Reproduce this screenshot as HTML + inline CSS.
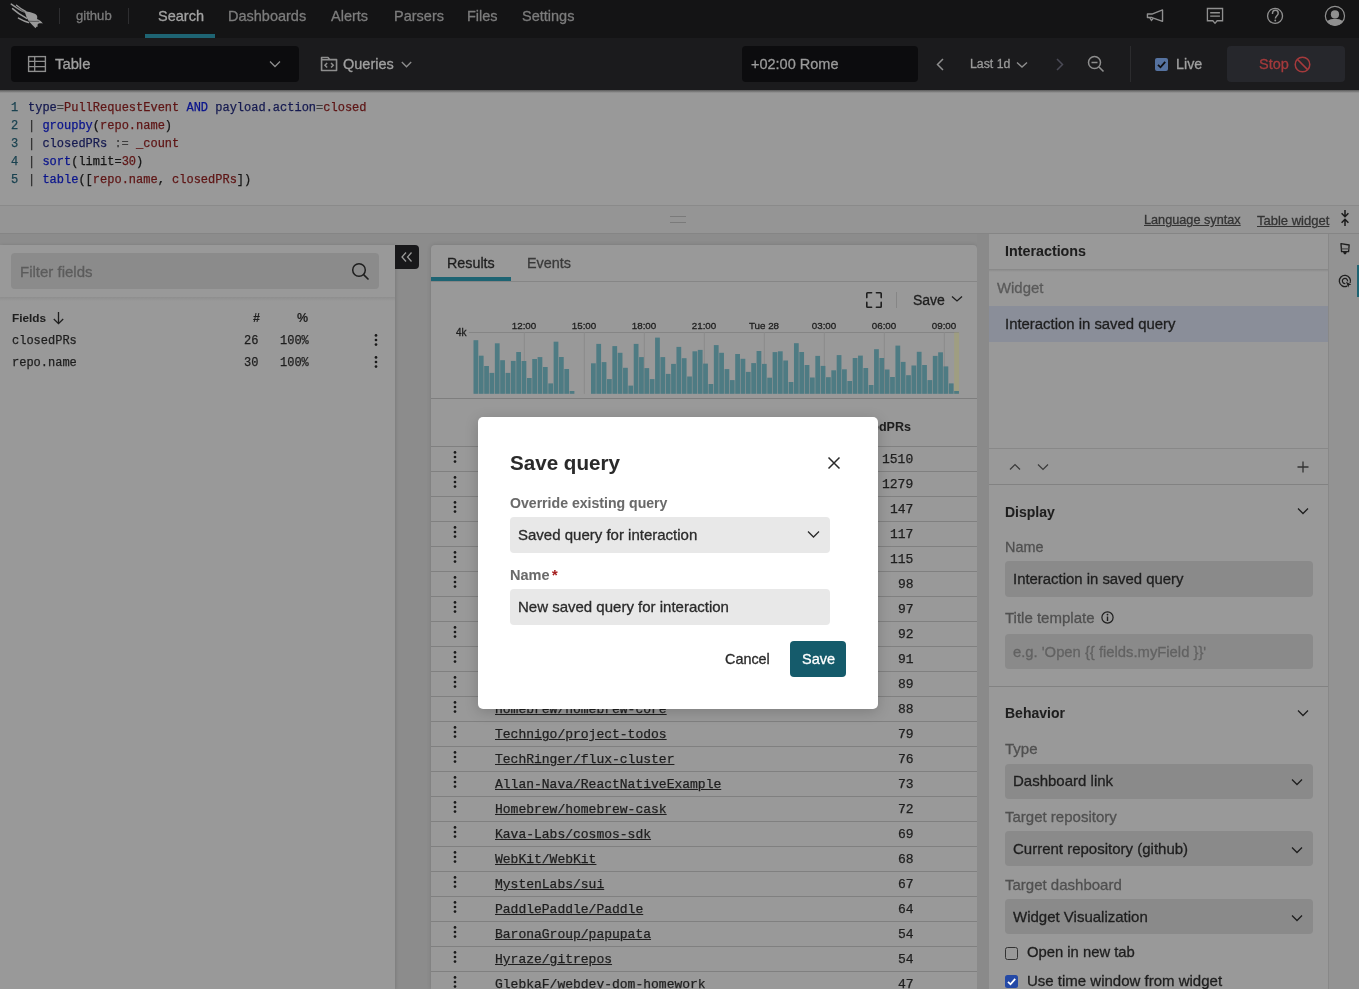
<!DOCTYPE html>
<html><head><meta charset="utf-8"><title>Save query</title>
<style>
html,body{margin:0;padding:0;}
body{width:1359px;height:989px;overflow:hidden;position:relative;background:#8d8d8d;font-family:"Liberation Sans",sans-serif;}
.a{position:absolute;}
.s{font-family:"Liberation Sans",sans-serif;white-space:pre;-webkit-text-stroke:0.3px currentColor;}
.m{font-family:"Liberation Mono",monospace;white-space:pre;-webkit-text-stroke:0.25px currentColor;}
svg{overflow:visible;}
.s,.m{will-change:transform;}
</style></head><body>
<div class="a" style="left:0px;top:0px;width:1359px;height:38px;background:#141415;"></div>
<svg class="a" style="left:5px;top:0px" width="50" height="34" viewBox="0 0 1359 924"><path d="M530 300 C650 320 790 350 850 400 C885 430 880 480 870 515 C930 540 990 580 1030 640 C990 632 955 625 915 640 C885 655 870 690 900 722 C870 712 850 725 830 770 C770 705 710 650 660 590 C620 545 580 470 530 300 Z" fill="#9a9a9a"/><path d="M170 112 C300 205 420 280 540 330" stroke="#9a9a9a" stroke-width="40" fill="none" stroke-linecap="round"/><path d="M312 142 C400 215 470 265 560 310" stroke="#9a9a9a" stroke-width="34" fill="none" stroke-linecap="round"/><path d="M205 235 C320 340 440 420 590 500" stroke="#9a9a9a" stroke-width="40" fill="none" stroke-linecap="round"/><path d="M365 492 C450 540 540 585 640 612" stroke="#9a9a9a" stroke-width="40" fill="none" stroke-linecap="round"/><path d="M640 575 C740 585 840 582 930 578" stroke="#141415" stroke-width="14" fill="none"/><path d="M300 175 C400 250 470 300 545 340" stroke="#141415" stroke-width="12" fill="none"/></svg>
<div class="a" style="left:59px;top:8px;width:1px;height:16px;background:#2e2e30;"></div>
<div class="a s" style="left:76px;top:8.91px;font-size:13.1px;line-height:13.1px;color:#7b7b7b;font-weight:400;">github</div>
<div class="a" style="left:128px;top:8px;width:1px;height:16px;background:#2e2e30;"></div>
<div class="a s" style="left:157.5px;top:8.92px;font-size:14.5px;line-height:14.5px;color:#a3a3a3;font-weight:400;">Search</div>
<div class="a s" style="left:227.7px;top:8.92px;font-size:14.5px;line-height:14.5px;color:#7c7c7c;font-weight:400;">Dashboards</div>
<div class="a s" style="left:330.7px;top:8.92px;font-size:14.5px;line-height:14.5px;color:#7c7c7c;font-weight:400;">Alerts</div>
<div class="a s" style="left:393.8px;top:8.92px;font-size:14.5px;line-height:14.5px;color:#7c7c7c;font-weight:400;">Parsers</div>
<div class="a s" style="left:467.3px;top:8.92px;font-size:14.5px;line-height:14.5px;color:#7c7c7c;font-weight:400;">Files</div>
<div class="a s" style="left:522.4px;top:8.92px;font-size:14.5px;line-height:14.5px;color:#7c7c7c;font-weight:400;">Settings</div>
<div class="a" style="left:145px;top:34px;width:70px;height:4px;background:#1e6473;"></div>
<svg class="a" style="left:1140px;top:2px" width="90" height="28" viewBox="0 0 1359 423"><path d="M112 182 H180 L340 120 V292 L180 235 H112 Z" fill="none" stroke="#909090" stroke-width="21" stroke-linejoin="round"/><path d="M148 238 L172 278 L198 250" fill="none" stroke="#909090" stroke-width="19"/><path d="M1018 98 H1247 V283 H1165 L1133 322 L1100 283 H1018 Z" fill="none" stroke="#909090" stroke-width="20"/><path d="M1060 162 H1207 M1060 213 H1207" stroke="#909090" stroke-width="20"/></svg>
<svg class="a" style="left:1260px;top:2px" width="90" height="28" viewBox="0 0 1359 423"><circle cx="227" cy="210" r="113" fill="none" stroke="#909090" stroke-width="20"/><path d="M188 180 C188 140 215 125 232 125 C258 125 275 145 275 170 C275 205 232 210 232 250" fill="none" stroke="#909090" stroke-width="22"/><circle cx="230" cy="280" r="14" fill="#909090"/><circle cx="1132" cy="210" r="145" fill="none" stroke="#909090" stroke-width="18"/><circle cx="1132" cy="188" r="62" fill="#909090"/><path d="M1010 292 C1040 262 1090 252 1132 252 C1175 252 1225 262 1255 292 C1225 335 1180 358 1132 358 C1084 358 1040 335 1010 292 Z" fill="#909090"/></svg>
<div class="a" style="left:0px;top:38px;width:1359px;height:52px;background:#1b1b1d;"></div>
<div class="a" style="left:11px;top:46px;width:288px;height:36px;background:#0c0c0e;border-radius:4px;"></div>
<svg class="a" style="left:27px;top:55px;" width="20" height="18" viewBox="0 0 20 18"><rect x="1.6" y="1.6" width="16.8" height="14.8" fill="none" stroke="#8e8e8e" stroke-width="1.4"/><path d="M1.6 6.4 H18.4 M1.6 11.6 H18.4 M7.7 1.6 V16.4" stroke="#8e8e8e" stroke-width="1.3"/></svg>
<div class="a s" style="left:55.3px;top:57.07px;font-size:14.8px;line-height:14.8px;color:#a0a0a0;font-weight:400;">Table</div>
<svg class="a" style="left:269px;top:60px;" width="12" height="8" viewBox="0 0 12 8"><path d="M1 1.5 L6 6.5 L11 1.5" fill="none" stroke="#8e8e8e" stroke-width="1.25"/></svg>
<svg class="a" style="left:310px;top:45px" width="110" height="40" viewBox="0 0 1359 494"><path d="M143 315 V155 H222 L242 180 H328 V315 Z M143 182 H328" fill="none" stroke="#8e8e8e" stroke-width="20" stroke-linejoin="round"/><path d="M212 222 L185 250 L212 278 M260 222 L287 250 L260 278" fill="none" stroke="#8e8e8e" stroke-width="19"/></svg>
<div class="a s" style="left:343px;top:56.72px;font-size:14.5px;line-height:14.5px;color:#a0a0a0;font-weight:400;">Queries</div>
<svg class="a" style="left:401px;top:61px;" width="11" height="7" viewBox="0 0 11 7"><path d="M0.8 1 L5.5 5.8 L10.2 1" fill="none" stroke="#8e8e8e" stroke-width="1.3"/></svg>
<div class="a" style="left:742px;top:46px;width:176px;height:36px;background:#0c0c0e;border-radius:4px;"></div>
<div class="a s" style="left:750.5px;top:56.72px;font-size:14.5px;line-height:14.5px;color:#9a9a9a;font-weight:400;">+02:00 Rome</div>
<svg class="a" style="left:935px;top:58px;" width="10" height="13" viewBox="0 0 10 13"><path d="M8 1 L2.5 6.5 L8 12" fill="none" stroke="#8e8e8e" stroke-width="1.5"/></svg>
<div class="a s" style="left:969.8px;top:58.09px;font-size:12.3px;line-height:12.3px;color:#9a9a9a;font-weight:400;">Last 1d</div>
<svg class="a" style="left:1016px;top:61px;" width="12" height="8" viewBox="0 0 12 8"><path d="M1 1.5 L6 6 L11 1.5" fill="none" stroke="#8e8e8e" stroke-width="1.4"/></svg>
<svg class="a" style="left:1055px;top:58px;" width="10" height="13" viewBox="0 0 10 13"><path d="M2 1 L7.5 6.5 L2 12" fill="none" stroke="#4a4a55" stroke-width="1.5"/></svg>
<svg class="a" style="left:1087px;top:55px;" width="18" height="18" viewBox="0 0 18 18"><circle cx="7.5" cy="7.5" r="6" fill="none" stroke="#8e8e8e" stroke-width="1.5"/><path d="M4.5 7.5 H10.5 M12 12 L16.5 16.5" stroke="#8e8e8e" stroke-width="1.6"/></svg>
<div class="a" style="left:1130px;top:46px;width:1px;height:36px;background:#2c2c2e;"></div>
<div class="a" style="left:1155px;top:58px;width:13px;height:13px;background:#5572a0;border-radius:2px;"></div>
<svg class="a" style="left:1155px;top:58px;" width="13" height="13" viewBox="0 0 13 13"><path d="M3 6.8 L5.5 9.3 L10.2 3.8" fill="none" stroke="#0e0e10" stroke-width="1.8"/></svg>
<div class="a s" style="left:1176.3px;top:56.89px;font-size:14.3px;line-height:14.3px;color:#a0a0a0;font-weight:400;">Live</div>
<div class="a" style="left:1227px;top:46px;width:118px;height:36px;background:#26272c;border-radius:4px;"></div>
<div class="a s" style="left:1259px;top:56.72px;font-size:14.5px;line-height:14.5px;color:#a53a3c;font-weight:400;">Stop</div>
<svg class="a" style="left:1294px;top:56px;" width="17" height="17" viewBox="0 0 17 17"><circle cx="8.5" cy="8.5" r="7.3" fill="none" stroke="#a53a3c" stroke-width="1.5"/><path d="M3.4 3.4 L13.6 13.6" stroke="#a53a3c" stroke-width="1.5"/></svg>
<div class="a" style="left:0px;top:90px;width:1359px;height:115px;background:#999999;"></div>
<div class="a" style="left:0px;top:90px;width:1359px;height:3px;background:linear-gradient(#5a5a5a,#999999);"></div>
<div class="a m" style="left:10.5px;top:101.81px;font-size:12px;line-height:12.0px;color:#1a4250;font-weight:400;">1</div>
<div class="a m" style="left:28.1px;top:101.81px;font-size:12px;line-height:12.0px;color:#161616;font-weight:400;"><span style="color:#151a50">type</span><span style="color:#3e3e3e">=</span><span style="color:#5e1515">PullRequestEvent</span> <span style="color:#0a148c">AND</span> <span style="color:#151a50">payload.action</span><span style="color:#3e3e3e">=</span><span style="color:#5e1515">closed</span></div>
<div class="a m" style="left:10.5px;top:119.81px;font-size:12px;line-height:12.0px;color:#1a4250;font-weight:400;">2</div>
<div class="a m" style="left:28.1px;top:119.81px;font-size:12px;line-height:12.0px;color:#161616;font-weight:400;"><span style="color:#2e2e2e">|</span> <span style="color:#0a148c">groupby</span><span style="color:#161616">(</span><span style="color:#5e1515">repo.name</span><span style="color:#161616">)</span></div>
<div class="a m" style="left:10.5px;top:137.81px;font-size:12px;line-height:12.0px;color:#1a4250;font-weight:400;">3</div>
<div class="a m" style="left:28.1px;top:137.81px;font-size:12px;line-height:12.0px;color:#161616;font-weight:400;"><span style="color:#2e2e2e">|</span> <span style="color:#151a50">closedPRs</span><span style="color:#3e3e3e"> := </span><span style="color:#5e1515">_count</span></div>
<div class="a m" style="left:10.5px;top:155.81px;font-size:12px;line-height:12.0px;color:#1a4250;font-weight:400;">4</div>
<div class="a m" style="left:28.1px;top:155.81px;font-size:12px;line-height:12.0px;color:#161616;font-weight:400;"><span style="color:#2e2e2e">|</span> <span style="color:#0a148c">sort</span><span style="color:#161616">(limit=</span><span style="color:#5e1515">30</span><span style="color:#161616">)</span></div>
<div class="a m" style="left:10.5px;top:173.81px;font-size:12px;line-height:12.0px;color:#1a4250;font-weight:400;">5</div>
<div class="a m" style="left:28.1px;top:173.81px;font-size:12px;line-height:12.0px;color:#161616;font-weight:400;"><span style="color:#2e2e2e">|</span> <span style="color:#0a148c">table</span><span style="color:#161616">([</span><span style="color:#5e1515">repo.name</span><span style="color:#161616">, </span><span style="color:#5e1515">closedPRs</span><span style="color:#161616">])</span></div>
<div class="a" style="left:0px;top:205px;width:1359px;height:28px;background:#959595;"></div>
<div class="a" style="left:0px;top:205px;width:1359px;height:1px;background:#8a8a8a;"></div>
<div class="a" style="left:670px;top:216px;width:16px;height:1px;background:#7a7a7a;"></div>
<div class="a" style="left:670px;top:222px;width:16px;height:1px;background:#7a7a7a;"></div>
<div class="a s" style="left:1143.5px;top:214.25px;font-size:12.7px;line-height:12.7px;color:#343434;font-weight:400;text-decoration:underline;">Language syntax</div>
<div class="a s" style="left:1256.6px;top:213.99px;font-size:13px;line-height:13.0px;color:#343434;font-weight:400;text-decoration:underline;">Table widget</div>
<svg class="a" style="left:1340px;top:209px;" width="10" height="18" viewBox="0 0 10 18"><path d="M5 1 V7.5 M1.6 4.3 L5 7.7 L8.4 4.3 M5 17 V10.5 M1.6 13.7 L5 10.3 L8.4 13.7" fill="none" stroke="#1a1a1a" stroke-width="1.5"/></svg>
<div class="a" style="left:0px;top:233px;width:1359px;height:1px;background:#858585;"></div>
<!--BODY-->
<div class="a" style="left:0px;top:234px;width:1359px;height:755px;background:#8c8c8c;"></div>
<div class="a" style="left:0px;top:245px;width:395px;height:744px;background:#999999;box-shadow:1px 0 3px rgba(0,0,0,0.12);"></div>
<div class="a" style="left:0px;top:297px;width:395px;height:4px;background:linear-gradient(#8e8e8e,#999999);"></div>
<div class="a" style="left:11px;top:253px;width:368px;height:36px;background:#8b8b8b;border-radius:4px;"></div>
<div class="a s" style="left:19.6px;top:263.80px;font-size:15px;line-height:15.0px;color:#5c5c5c;font-weight:400;">Filter fields</div>
<svg class="a" style="left:351px;top:262px;" width="19" height="19" viewBox="0 0 19 19"><circle cx="8" cy="8" r="6.3" fill="none" stroke="#1e1e1e" stroke-width="1.5"/><path d="M12.6 12.6 L17.5 17.5" stroke="#1e1e1e" stroke-width="1.6"/></svg>
<div class="a s" style="left:12px;top:312.91px;font-size:11.8px;line-height:11.8px;color:#1e1e1e;font-weight:700;-webkit-text-stroke:0.05px currentColor;">Fields</div>
<svg class="a" style="left:52px;top:311px;" width="13" height="14" viewBox="0 0 13 14"><path d="M6.5 1 V12.5 M1.8 8 L6.5 12.7 L11.2 8" fill="none" stroke="#1e1e1e" stroke-width="1.3"/></svg>
<div class="a s" style="right:1099.5px;top:312.32px;font-size:12.5px;line-height:12.5px;color:#1e1e1e;font-weight:700;-webkit-text-stroke:0.05px currentColor;">#</div>
<div class="a s" style="right:1050.5px;top:312.32px;font-size:12.5px;line-height:12.5px;color:#1e1e1e;font-weight:700;-webkit-text-stroke:0.05px currentColor;">%</div>
<div class="a m" style="left:12px;top:334.81px;font-size:12px;line-height:12.0px;color:#1e1e1e;font-weight:400;">closedPRs</div>
<div class="a m" style="right:1101px;top:334.81px;font-size:12px;line-height:12.0px;color:#1e1e1e;font-weight:400;">26</div>
<div class="a m" style="right:1050.5px;top:334.81px;font-size:12px;line-height:12.0px;color:#1e1e1e;font-weight:400;">100%</div>
<svg class="a" style="left:374px;top:332.5px;" width="4" height="14" viewBox="0 0 4 14"><circle cx="2" cy="2.4" r="1.35" fill="#1a1a1a"/><circle cx="2" cy="7" r="1.35" fill="#1a1a1a"/><circle cx="2" cy="11.6" r="1.35" fill="#1a1a1a"/></svg>
<div class="a m" style="left:12px;top:356.81px;font-size:12px;line-height:12.0px;color:#1e1e1e;font-weight:400;">repo.name</div>
<div class="a m" style="right:1101px;top:356.81px;font-size:12px;line-height:12.0px;color:#1e1e1e;font-weight:400;">30</div>
<div class="a m" style="right:1050.5px;top:356.81px;font-size:12px;line-height:12.0px;color:#1e1e1e;font-weight:400;">100%</div>
<svg class="a" style="left:374px;top:354.5px;" width="4" height="14" viewBox="0 0 4 14"><circle cx="2" cy="2.4" r="1.35" fill="#1a1a1a"/><circle cx="2" cy="7" r="1.35" fill="#1a1a1a"/><circle cx="2" cy="11.6" r="1.35" fill="#1a1a1a"/></svg>
<div class="a" style="left:395px;top:245px;width:24px;height:24px;background:#18181a;border-radius:0 4px 4px 0;"></div>
<svg class="a" style="left:399px;top:250px;" width="16" height="14" viewBox="0 0 16 14"><path d="M7 2.5 L3 7 L7 11.5 M12.5 2.5 L8.5 7 L12.5 11.5" fill="none" stroke="#9a9a9a" stroke-width="1.3"/></svg>
<div class="a" style="left:431px;top:245px;width:546px;height:744px;background:#999999;border-radius:4px 4px 0 0;box-shadow:0 0 4px rgba(0,0,0,0.15);"></div>
<div class="a s" style="left:447.3px;top:255.89px;font-size:14.3px;line-height:14.3px;color:#1e1e1e;font-weight:400;">Results</div>
<div class="a s" style="left:527px;top:255.81px;font-size:14.4px;line-height:14.4px;color:#3a3a3a;font-weight:400;">Events</div>
<div class="a" style="left:431px;top:281px;width:546px;height:1px;background:#868686;"></div>
<div class="a" style="left:431px;top:277px;width:80px;height:4px;background:#1e6473;"></div>
<svg class="a" style="left:865px;top:291px;" width="18" height="18" viewBox="0 0 18 18"><path d="M1.8 6.6 V2.6 Q1.8 1.8 2.6 1.8 H6.6 M11.4 1.8 H15.4 Q16.2 1.8 16.2 2.6 V6.6 M16.2 11.4 V15.4 Q16.2 16.2 15.4 16.2 H11.4 M6.6 16.2 H2.6 Q1.8 16.2 1.8 15.4 V11.4" fill="none" stroke="#1e1e1e" stroke-width="1.6" stroke-linecap="round"/></svg>
<div class="a" style="left:896px;top:292px;width:1px;height:16px;background:#868686;"></div>
<div class="a s" style="left:912.9px;top:292.75px;font-size:14px;line-height:14.0px;color:#1e1e1e;font-weight:400;">Save</div>
<svg class="a" style="left:951px;top:295px;" width="12" height="8" viewBox="0 0 12 8"><path d="M1 1.5 L6 6 L11 1.5" fill="none" stroke="#1e1e1e" stroke-width="1.3"/></svg>
<div class="a s" style="left:484.29999999999995px;width:80px;text-align:center;top:320.30px;font-size:9.8px;line-height:11px;color:#1e1e1e;">12:00</div>
<div class="a s" style="left:544.3px;width:80px;text-align:center;top:320.30px;font-size:9.8px;line-height:11px;color:#1e1e1e;">15:00</div>
<div class="a s" style="left:604.3px;width:80px;text-align:center;top:320.30px;font-size:9.8px;line-height:11px;color:#1e1e1e;">18:00</div>
<div class="a s" style="left:664.3px;width:80px;text-align:center;top:320.30px;font-size:9.8px;line-height:11px;color:#1e1e1e;">21:00</div>
<div class="a s" style="left:724.3px;width:80px;text-align:center;top:320.30px;font-size:9.8px;line-height:11px;color:#1e1e1e;">Tue 28</div>
<div class="a s" style="left:784.3px;width:80px;text-align:center;top:320.30px;font-size:9.8px;line-height:11px;color:#1e1e1e;">03:00</div>
<div class="a s" style="left:844.3px;width:80px;text-align:center;top:320.30px;font-size:9.8px;line-height:11px;color:#1e1e1e;">06:00</div>
<div class="a s" style="left:904.3px;width:80px;text-align:center;top:320.30px;font-size:9.8px;line-height:11px;color:#1e1e1e;">09:00</div>
<div class="a s" style="right:892.5px;top:327.53px;font-size:10px;line-height:10.0px;color:#1e1e1e;font-weight:400;">4k</div>
<svg class="a" style="left:431px;top:245px;" width="546" height="200" viewBox="0 0 546 200"><rect x="37.80000000000001" y="87" width="489.99999999999994" height="1" fill="#858585"/><rect x="92.80" y="87" width="1" height="61.80000000000001" fill="#8a8a8a"/><rect x="152.80" y="87" width="1" height="61.80000000000001" fill="#8a8a8a"/><rect x="212.80" y="87" width="1" height="61.80000000000001" fill="#8a8a8a"/><rect x="272.80" y="87" width="1" height="61.80000000000001" fill="#8a8a8a"/><rect x="332.80" y="87" width="1" height="61.80000000000001" fill="#8a8a8a"/><rect x="392.80" y="87" width="1" height="61.80000000000001" fill="#8a8a8a"/><rect x="452.80" y="87" width="1" height="61.80000000000001" fill="#8a8a8a"/><rect x="512.80" y="87" width="1" height="61.80000000000001" fill="#8a8a8a"/><rect x="523.19" y="87.5" width="4.9" height="61.3" fill="#a2a07a" opacity="0.75"/><rect x="42.50" y="95.20" width="4.75" height="53.60" fill="#4e7b83"/><rect x="47.84" y="110.70" width="4.75" height="38.10" fill="#4e7b83"/><rect x="53.18" y="121.00" width="4.75" height="27.80" fill="#4e7b83"/><rect x="58.52" y="127.90" width="4.75" height="20.90" fill="#4e7b83"/><rect x="63.86" y="98.30" width="4.75" height="50.50" fill="#4e7b83"/><rect x="69.20" y="115.20" width="4.75" height="33.60" fill="#4e7b83"/><rect x="74.55" y="127.90" width="4.75" height="20.90" fill="#4e7b83"/><rect x="79.89" y="115.90" width="4.75" height="32.90" fill="#4e7b83"/><rect x="85.23" y="107.00" width="4.75" height="41.80" fill="#4e7b83"/><rect x="90.57" y="116.00" width="4.75" height="32.80" fill="#4e7b83"/><rect x="95.91" y="133.00" width="4.75" height="15.80" fill="#4e7b83"/><rect x="101.25" y="114.00" width="4.75" height="34.80" fill="#4e7b83"/><rect x="106.59" y="112.10" width="4.75" height="36.70" fill="#4e7b83"/><rect x="111.93" y="122.00" width="4.75" height="26.80" fill="#4e7b83"/><rect x="117.27" y="138.40" width="4.75" height="10.40" fill="#4e7b83"/><rect x="122.62" y="96.70" width="4.75" height="52.10" fill="#4e7b83"/><rect x="127.96" y="112.00" width="4.75" height="36.80" fill="#4e7b83"/><rect x="133.30" y="124.00" width="4.75" height="24.80" fill="#4e7b83"/><rect x="138.64" y="146.00" width="4.75" height="2.80" fill="#4e7b83"/><rect x="160.00" y="118.30" width="4.75" height="30.50" fill="#4e7b83"/><rect x="165.34" y="98.90" width="4.75" height="49.90" fill="#4e7b83"/><rect x="170.68" y="117.10" width="4.75" height="31.70" fill="#4e7b83"/><rect x="176.02" y="134.10" width="4.75" height="14.70" fill="#4e7b83"/><rect x="181.37" y="101.10" width="4.75" height="47.70" fill="#4e7b83"/><rect x="186.71" y="107.80" width="4.75" height="41.00" fill="#4e7b83"/><rect x="192.05" y="122.80" width="4.75" height="26.00" fill="#4e7b83"/><rect x="197.39" y="140.60" width="4.75" height="8.20" fill="#4e7b83"/><rect x="202.73" y="98.90" width="4.75" height="49.90" fill="#4e7b83"/><rect x="208.07" y="112.10" width="4.75" height="36.70" fill="#4e7b83"/><rect x="213.41" y="123.10" width="4.75" height="25.70" fill="#4e7b83"/><rect x="218.75" y="134.10" width="4.75" height="14.70" fill="#4e7b83"/><rect x="224.09" y="92.60" width="4.75" height="56.20" fill="#4e7b83"/><rect x="229.43" y="112.10" width="4.75" height="36.70" fill="#4e7b83"/><rect x="234.78" y="128.90" width="4.75" height="19.90" fill="#4e7b83"/><rect x="240.12" y="118.90" width="4.75" height="29.90" fill="#4e7b83"/><rect x="245.46" y="101.90" width="4.75" height="46.90" fill="#4e7b83"/><rect x="250.80" y="113.20" width="4.75" height="35.60" fill="#4e7b83"/><rect x="256.14" y="131.50" width="4.75" height="17.30" fill="#4e7b83"/><rect x="261.48" y="106.30" width="4.75" height="42.50" fill="#4e7b83"/><rect x="266.82" y="104.90" width="4.75" height="43.90" fill="#4e7b83"/><rect x="272.16" y="118.60" width="4.75" height="30.20" fill="#4e7b83"/><rect x="277.50" y="139.00" width="4.75" height="9.80" fill="#4e7b83"/><rect x="282.85" y="100.10" width="4.75" height="48.70" fill="#4e7b83"/><rect x="288.19" y="107.80" width="4.75" height="41.00" fill="#4e7b83"/><rect x="293.53" y="124.10" width="4.75" height="24.70" fill="#4e7b83"/><rect x="298.87" y="135.10" width="4.75" height="13.70" fill="#4e7b83"/><rect x="304.21" y="109.00" width="4.75" height="39.80" fill="#4e7b83"/><rect x="309.55" y="113.80" width="4.75" height="35.00" fill="#4e7b83"/><rect x="314.89" y="126.90" width="4.75" height="21.90" fill="#4e7b83"/><rect x="320.23" y="118.10" width="4.75" height="30.70" fill="#4e7b83"/><rect x="325.57" y="106.00" width="4.75" height="42.80" fill="#4e7b83"/><rect x="330.91" y="118.90" width="4.75" height="29.90" fill="#4e7b83"/><rect x="336.25" y="132.70" width="4.75" height="16.10" fill="#4e7b83"/><rect x="341.60" y="107.10" width="4.75" height="41.70" fill="#4e7b83"/><rect x="346.94" y="106.30" width="4.75" height="42.50" fill="#4e7b83"/><rect x="352.28" y="115.50" width="4.75" height="33.30" fill="#4e7b83"/><rect x="357.62" y="137.00" width="4.75" height="11.80" fill="#4e7b83"/><rect x="362.96" y="98.20" width="4.75" height="50.60" fill="#4e7b83"/><rect x="368.30" y="107.00" width="4.75" height="41.80" fill="#4e7b83"/><rect x="373.64" y="120.00" width="4.75" height="28.80" fill="#4e7b83"/><rect x="378.98" y="132.50" width="4.75" height="16.30" fill="#4e7b83"/><rect x="384.32" y="110.90" width="4.75" height="37.90" fill="#4e7b83"/><rect x="389.66" y="120.90" width="4.75" height="27.90" fill="#4e7b83"/><rect x="395.01" y="132.20" width="4.75" height="16.60" fill="#4e7b83"/><rect x="400.35" y="125.30" width="4.75" height="23.50" fill="#4e7b83"/><rect x="405.69" y="110.10" width="4.75" height="38.70" fill="#4e7b83"/><rect x="411.03" y="124.30" width="4.75" height="24.50" fill="#4e7b83"/><rect x="416.37" y="136.00" width="4.75" height="12.80" fill="#4e7b83"/><rect x="421.71" y="113.00" width="4.75" height="35.80" fill="#4e7b83"/><rect x="427.05" y="110.60" width="4.75" height="38.20" fill="#4e7b83"/><rect x="432.39" y="123.00" width="4.75" height="25.80" fill="#4e7b83"/><rect x="437.73" y="140.00" width="4.75" height="8.80" fill="#4e7b83"/><rect x="443.08" y="104.20" width="4.75" height="44.60" fill="#4e7b83"/><rect x="448.42" y="113.00" width="4.75" height="35.80" fill="#4e7b83"/><rect x="453.76" y="124.50" width="4.75" height="24.30" fill="#4e7b83"/><rect x="459.10" y="132.00" width="4.75" height="16.80" fill="#4e7b83"/><rect x="464.44" y="100.60" width="4.75" height="48.20" fill="#4e7b83"/><rect x="469.78" y="116.90" width="4.75" height="31.90" fill="#4e7b83"/><rect x="475.12" y="130.20" width="4.75" height="18.60" fill="#4e7b83"/><rect x="480.46" y="120.50" width="4.75" height="28.30" fill="#4e7b83"/><rect x="485.80" y="106.80" width="4.75" height="42.00" fill="#4e7b83"/><rect x="491.14" y="120.00" width="4.75" height="28.80" fill="#4e7b83"/><rect x="496.49" y="135.10" width="4.75" height="13.70" fill="#4e7b83"/><rect x="501.83" y="110.90" width="4.75" height="37.90" fill="#4e7b83"/><rect x="507.17" y="107.30" width="4.75" height="41.50" fill="#4e7b83"/><rect x="512.51" y="121.40" width="4.75" height="27.40" fill="#4e7b83"/><rect x="517.85" y="138.40" width="4.75" height="10.40" fill="#4e7b83"/><rect x="523.19" y="146.00" width="4.75" height="2.80" fill="#4e7b83"/></svg>
<div class="a" style="left:431px;top:398px;width:546px;height:1px;background:#7e7e7e;"></div>
<div class="a s" style="right:447.79999999999995px;top:421.02px;font-size:12.5px;line-height:12.5px;color:#1e1e1e;font-weight:700;-webkit-text-stroke:0.05px currentColor;">closedPRs</div>
<div class="a" style="left:431px;top:446px;width:546px;height:1px;background:#808080;"></div>
<svg class="a" style="left:453px;top:450px;" width="4" height="14" viewBox="0 0 4 14"><circle cx="2" cy="2.4" r="1.35" fill="#1a1a1a"/><circle cx="2" cy="7" r="1.35" fill="#1a1a1a"/><circle cx="2" cy="11.6" r="1.35" fill="#1a1a1a"/></svg>
<div class="a m" style="left:494.9px;top:452.84px;font-size:13px;line-height:13.0px;color:#1e1e1e;font-weight:400;text-decoration:underline;">apache/superset</div>
<div class="a m" style="right:445.79999999999995px;top:452.84px;font-size:13px;line-height:13.0px;color:#1e1e1e;font-weight:400;">1510</div>
<div class="a" style="left:431px;top:471px;width:546px;height:1px;background:#808080;"></div>
<svg class="a" style="left:453px;top:475px;" width="4" height="14" viewBox="0 0 4 14"><circle cx="2" cy="2.4" r="1.35" fill="#1a1a1a"/><circle cx="2" cy="7" r="1.35" fill="#1a1a1a"/><circle cx="2" cy="11.6" r="1.35" fill="#1a1a1a"/></svg>
<div class="a m" style="left:494.9px;top:477.84px;font-size:13px;line-height:13.0px;color:#1e1e1e;font-weight:400;text-decoration:underline;">ansible/ansible</div>
<div class="a m" style="right:445.79999999999995px;top:477.84px;font-size:13px;line-height:13.0px;color:#1e1e1e;font-weight:400;">1279</div>
<div class="a" style="left:431px;top:496px;width:546px;height:1px;background:#808080;"></div>
<svg class="a" style="left:453px;top:500px;" width="4" height="14" viewBox="0 0 4 14"><circle cx="2" cy="2.4" r="1.35" fill="#1a1a1a"/><circle cx="2" cy="7" r="1.35" fill="#1a1a1a"/><circle cx="2" cy="11.6" r="1.35" fill="#1a1a1a"/></svg>
<div class="a m" style="left:494.9px;top:502.84px;font-size:13px;line-height:13.0px;color:#1e1e1e;font-weight:400;text-decoration:underline;">elastic/kibana</div>
<div class="a m" style="right:445.79999999999995px;top:502.84px;font-size:13px;line-height:13.0px;color:#1e1e1e;font-weight:400;">147</div>
<div class="a" style="left:431px;top:521px;width:546px;height:1px;background:#808080;"></div>
<svg class="a" style="left:453px;top:525px;" width="4" height="14" viewBox="0 0 4 14"><circle cx="2" cy="2.4" r="1.35" fill="#1a1a1a"/><circle cx="2" cy="7" r="1.35" fill="#1a1a1a"/><circle cx="2" cy="11.6" r="1.35" fill="#1a1a1a"/></svg>
<div class="a m" style="left:494.9px;top:527.84px;font-size:13px;line-height:13.0px;color:#1e1e1e;font-weight:400;text-decoration:underline;">grafana/grafana</div>
<div class="a m" style="right:445.79999999999995px;top:527.84px;font-size:13px;line-height:13.0px;color:#1e1e1e;font-weight:400;">117</div>
<div class="a" style="left:431px;top:546px;width:546px;height:1px;background:#808080;"></div>
<svg class="a" style="left:453px;top:550px;" width="4" height="14" viewBox="0 0 4 14"><circle cx="2" cy="2.4" r="1.35" fill="#1a1a1a"/><circle cx="2" cy="7" r="1.35" fill="#1a1a1a"/><circle cx="2" cy="11.6" r="1.35" fill="#1a1a1a"/></svg>
<div class="a m" style="left:494.9px;top:552.84px;font-size:13px;line-height:13.0px;color:#1e1e1e;font-weight:400;text-decoration:underline;">pytorch/pytorch</div>
<div class="a m" style="right:445.79999999999995px;top:552.84px;font-size:13px;line-height:13.0px;color:#1e1e1e;font-weight:400;">115</div>
<div class="a" style="left:431px;top:571px;width:546px;height:1px;background:#808080;"></div>
<svg class="a" style="left:453px;top:575px;" width="4" height="14" viewBox="0 0 4 14"><circle cx="2" cy="2.4" r="1.35" fill="#1a1a1a"/><circle cx="2" cy="7" r="1.35" fill="#1a1a1a"/><circle cx="2" cy="11.6" r="1.35" fill="#1a1a1a"/></svg>
<div class="a m" style="left:494.9px;top:577.84px;font-size:13px;line-height:13.0px;color:#1e1e1e;font-weight:400;text-decoration:underline;">vercel/next.js</div>
<div class="a m" style="right:445.79999999999995px;top:577.84px;font-size:13px;line-height:13.0px;color:#1e1e1e;font-weight:400;">98</div>
<div class="a" style="left:431px;top:596px;width:546px;height:1px;background:#808080;"></div>
<svg class="a" style="left:453px;top:600px;" width="4" height="14" viewBox="0 0 4 14"><circle cx="2" cy="2.4" r="1.35" fill="#1a1a1a"/><circle cx="2" cy="7" r="1.35" fill="#1a1a1a"/><circle cx="2" cy="11.6" r="1.35" fill="#1a1a1a"/></svg>
<div class="a m" style="left:494.9px;top:602.84px;font-size:13px;line-height:13.0px;color:#1e1e1e;font-weight:400;text-decoration:underline;">microsoft/vscode</div>
<div class="a m" style="right:445.79999999999995px;top:602.84px;font-size:13px;line-height:13.0px;color:#1e1e1e;font-weight:400;">97</div>
<div class="a" style="left:431px;top:621px;width:546px;height:1px;background:#808080;"></div>
<svg class="a" style="left:453px;top:625px;" width="4" height="14" viewBox="0 0 4 14"><circle cx="2" cy="2.4" r="1.35" fill="#1a1a1a"/><circle cx="2" cy="7" r="1.35" fill="#1a1a1a"/><circle cx="2" cy="11.6" r="1.35" fill="#1a1a1a"/></svg>
<div class="a m" style="left:494.9px;top:627.84px;font-size:13px;line-height:13.0px;color:#1e1e1e;font-weight:400;text-decoration:underline;">kubernetes/kubernetes</div>
<div class="a m" style="right:445.79999999999995px;top:627.84px;font-size:13px;line-height:13.0px;color:#1e1e1e;font-weight:400;">92</div>
<div class="a" style="left:431px;top:646px;width:546px;height:1px;background:#808080;"></div>
<svg class="a" style="left:453px;top:650px;" width="4" height="14" viewBox="0 0 4 14"><circle cx="2" cy="2.4" r="1.35" fill="#1a1a1a"/><circle cx="2" cy="7" r="1.35" fill="#1a1a1a"/><circle cx="2" cy="11.6" r="1.35" fill="#1a1a1a"/></svg>
<div class="a m" style="left:494.9px;top:652.84px;font-size:13px;line-height:13.0px;color:#1e1e1e;font-weight:400;text-decoration:underline;">home-assistant/core</div>
<div class="a m" style="right:445.79999999999995px;top:652.84px;font-size:13px;line-height:13.0px;color:#1e1e1e;font-weight:400;">91</div>
<div class="a" style="left:431px;top:671px;width:546px;height:1px;background:#808080;"></div>
<svg class="a" style="left:453px;top:675px;" width="4" height="14" viewBox="0 0 4 14"><circle cx="2" cy="2.4" r="1.35" fill="#1a1a1a"/><circle cx="2" cy="7" r="1.35" fill="#1a1a1a"/><circle cx="2" cy="11.6" r="1.35" fill="#1a1a1a"/></svg>
<div class="a m" style="left:494.9px;top:677.84px;font-size:13px;line-height:13.0px;color:#1e1e1e;font-weight:400;text-decoration:underline;">NixOS/nixpkgs</div>
<div class="a m" style="right:445.79999999999995px;top:677.84px;font-size:13px;line-height:13.0px;color:#1e1e1e;font-weight:400;">89</div>
<div class="a" style="left:431px;top:696px;width:546px;height:1px;background:#808080;"></div>
<svg class="a" style="left:453px;top:700px;" width="4" height="14" viewBox="0 0 4 14"><circle cx="2" cy="2.4" r="1.35" fill="#1a1a1a"/><circle cx="2" cy="7" r="1.35" fill="#1a1a1a"/><circle cx="2" cy="11.6" r="1.35" fill="#1a1a1a"/></svg>
<div class="a m" style="left:494.9px;top:702.84px;font-size:13px;line-height:13.0px;color:#1e1e1e;font-weight:400;text-decoration:underline;">Homebrew/homebrew-core</div>
<div class="a m" style="right:445.79999999999995px;top:702.84px;font-size:13px;line-height:13.0px;color:#1e1e1e;font-weight:400;">88</div>
<div class="a" style="left:431px;top:721px;width:546px;height:1px;background:#808080;"></div>
<svg class="a" style="left:453px;top:725px;" width="4" height="14" viewBox="0 0 4 14"><circle cx="2" cy="2.4" r="1.35" fill="#1a1a1a"/><circle cx="2" cy="7" r="1.35" fill="#1a1a1a"/><circle cx="2" cy="11.6" r="1.35" fill="#1a1a1a"/></svg>
<div class="a m" style="left:494.9px;top:727.84px;font-size:13px;line-height:13.0px;color:#1e1e1e;font-weight:400;text-decoration:underline;">Technigo/project-todos</div>
<div class="a m" style="right:445.79999999999995px;top:727.84px;font-size:13px;line-height:13.0px;color:#1e1e1e;font-weight:400;">79</div>
<div class="a" style="left:431px;top:746px;width:546px;height:1px;background:#808080;"></div>
<svg class="a" style="left:453px;top:750px;" width="4" height="14" viewBox="0 0 4 14"><circle cx="2" cy="2.4" r="1.35" fill="#1a1a1a"/><circle cx="2" cy="7" r="1.35" fill="#1a1a1a"/><circle cx="2" cy="11.6" r="1.35" fill="#1a1a1a"/></svg>
<div class="a m" style="left:494.9px;top:752.84px;font-size:13px;line-height:13.0px;color:#1e1e1e;font-weight:400;text-decoration:underline;">TechRinger/flux-cluster</div>
<div class="a m" style="right:445.79999999999995px;top:752.84px;font-size:13px;line-height:13.0px;color:#1e1e1e;font-weight:400;">76</div>
<div class="a" style="left:431px;top:771px;width:546px;height:1px;background:#808080;"></div>
<svg class="a" style="left:453px;top:775px;" width="4" height="14" viewBox="0 0 4 14"><circle cx="2" cy="2.4" r="1.35" fill="#1a1a1a"/><circle cx="2" cy="7" r="1.35" fill="#1a1a1a"/><circle cx="2" cy="11.6" r="1.35" fill="#1a1a1a"/></svg>
<div class="a m" style="left:494.9px;top:777.84px;font-size:13px;line-height:13.0px;color:#1e1e1e;font-weight:400;text-decoration:underline;">Allan-Nava/ReactNativeExample</div>
<div class="a m" style="right:445.79999999999995px;top:777.84px;font-size:13px;line-height:13.0px;color:#1e1e1e;font-weight:400;">73</div>
<div class="a" style="left:431px;top:796px;width:546px;height:1px;background:#808080;"></div>
<svg class="a" style="left:453px;top:800px;" width="4" height="14" viewBox="0 0 4 14"><circle cx="2" cy="2.4" r="1.35" fill="#1a1a1a"/><circle cx="2" cy="7" r="1.35" fill="#1a1a1a"/><circle cx="2" cy="11.6" r="1.35" fill="#1a1a1a"/></svg>
<div class="a m" style="left:494.9px;top:802.84px;font-size:13px;line-height:13.0px;color:#1e1e1e;font-weight:400;text-decoration:underline;">Homebrew/homebrew-cask</div>
<div class="a m" style="right:445.79999999999995px;top:802.84px;font-size:13px;line-height:13.0px;color:#1e1e1e;font-weight:400;">72</div>
<div class="a" style="left:431px;top:821px;width:546px;height:1px;background:#808080;"></div>
<svg class="a" style="left:453px;top:825px;" width="4" height="14" viewBox="0 0 4 14"><circle cx="2" cy="2.4" r="1.35" fill="#1a1a1a"/><circle cx="2" cy="7" r="1.35" fill="#1a1a1a"/><circle cx="2" cy="11.6" r="1.35" fill="#1a1a1a"/></svg>
<div class="a m" style="left:494.9px;top:827.84px;font-size:13px;line-height:13.0px;color:#1e1e1e;font-weight:400;text-decoration:underline;">Kava-Labs/cosmos-sdk</div>
<div class="a m" style="right:445.79999999999995px;top:827.84px;font-size:13px;line-height:13.0px;color:#1e1e1e;font-weight:400;">69</div>
<div class="a" style="left:431px;top:846px;width:546px;height:1px;background:#808080;"></div>
<svg class="a" style="left:453px;top:850px;" width="4" height="14" viewBox="0 0 4 14"><circle cx="2" cy="2.4" r="1.35" fill="#1a1a1a"/><circle cx="2" cy="7" r="1.35" fill="#1a1a1a"/><circle cx="2" cy="11.6" r="1.35" fill="#1a1a1a"/></svg>
<div class="a m" style="left:494.9px;top:852.84px;font-size:13px;line-height:13.0px;color:#1e1e1e;font-weight:400;text-decoration:underline;">WebKit/WebKit</div>
<div class="a m" style="right:445.79999999999995px;top:852.84px;font-size:13px;line-height:13.0px;color:#1e1e1e;font-weight:400;">68</div>
<div class="a" style="left:431px;top:871px;width:546px;height:1px;background:#808080;"></div>
<svg class="a" style="left:453px;top:875px;" width="4" height="14" viewBox="0 0 4 14"><circle cx="2" cy="2.4" r="1.35" fill="#1a1a1a"/><circle cx="2" cy="7" r="1.35" fill="#1a1a1a"/><circle cx="2" cy="11.6" r="1.35" fill="#1a1a1a"/></svg>
<div class="a m" style="left:494.9px;top:877.84px;font-size:13px;line-height:13.0px;color:#1e1e1e;font-weight:400;text-decoration:underline;">MystenLabs/sui</div>
<div class="a m" style="right:445.79999999999995px;top:877.84px;font-size:13px;line-height:13.0px;color:#1e1e1e;font-weight:400;">67</div>
<div class="a" style="left:431px;top:896px;width:546px;height:1px;background:#808080;"></div>
<svg class="a" style="left:453px;top:900px;" width="4" height="14" viewBox="0 0 4 14"><circle cx="2" cy="2.4" r="1.35" fill="#1a1a1a"/><circle cx="2" cy="7" r="1.35" fill="#1a1a1a"/><circle cx="2" cy="11.6" r="1.35" fill="#1a1a1a"/></svg>
<div class="a m" style="left:494.9px;top:902.84px;font-size:13px;line-height:13.0px;color:#1e1e1e;font-weight:400;text-decoration:underline;">PaddlePaddle/Paddle</div>
<div class="a m" style="right:445.79999999999995px;top:902.84px;font-size:13px;line-height:13.0px;color:#1e1e1e;font-weight:400;">64</div>
<div class="a" style="left:431px;top:921px;width:546px;height:1px;background:#808080;"></div>
<svg class="a" style="left:453px;top:925px;" width="4" height="14" viewBox="0 0 4 14"><circle cx="2" cy="2.4" r="1.35" fill="#1a1a1a"/><circle cx="2" cy="7" r="1.35" fill="#1a1a1a"/><circle cx="2" cy="11.6" r="1.35" fill="#1a1a1a"/></svg>
<div class="a m" style="left:494.9px;top:927.84px;font-size:13px;line-height:13.0px;color:#1e1e1e;font-weight:400;text-decoration:underline;">BaronaGroup/papupata</div>
<div class="a m" style="right:445.79999999999995px;top:927.84px;font-size:13px;line-height:13.0px;color:#1e1e1e;font-weight:400;">54</div>
<div class="a" style="left:431px;top:946px;width:546px;height:1px;background:#808080;"></div>
<svg class="a" style="left:453px;top:950px;" width="4" height="14" viewBox="0 0 4 14"><circle cx="2" cy="2.4" r="1.35" fill="#1a1a1a"/><circle cx="2" cy="7" r="1.35" fill="#1a1a1a"/><circle cx="2" cy="11.6" r="1.35" fill="#1a1a1a"/></svg>
<div class="a m" style="left:494.9px;top:952.84px;font-size:13px;line-height:13.0px;color:#1e1e1e;font-weight:400;text-decoration:underline;">Hyraze/gitrepos</div>
<div class="a m" style="right:445.79999999999995px;top:952.84px;font-size:13px;line-height:13.0px;color:#1e1e1e;font-weight:400;">54</div>
<div class="a" style="left:431px;top:971px;width:546px;height:1px;background:#808080;"></div>
<svg class="a" style="left:453px;top:975px;" width="4" height="14" viewBox="0 0 4 14"><circle cx="2" cy="2.4" r="1.35" fill="#1a1a1a"/><circle cx="2" cy="7" r="1.35" fill="#1a1a1a"/><circle cx="2" cy="11.6" r="1.35" fill="#1a1a1a"/></svg>
<div class="a m" style="left:494.9px;top:977.84px;font-size:13px;line-height:13.0px;color:#1e1e1e;font-weight:400;text-decoration:underline;">GlebkaF/webdev-dom-homework</div>
<div class="a m" style="right:445.79999999999995px;top:977.84px;font-size:13px;line-height:13.0px;color:#1e1e1e;font-weight:400;">47</div>
<div class="a" style="left:977px;top:234px;width:12px;height:755px;background:#8a8a8a;"></div>
<div class="a" style="left:989px;top:234px;width:339px;height:755px;background:#999999;"></div>
<div class="a s" style="left:1005px;top:244.39px;font-size:14.3px;line-height:14.3px;color:#1e1e1e;font-weight:700;-webkit-text-stroke:0.05px currentColor;">Interactions</div>
<div class="a" style="left:989px;top:269px;width:339px;height:3px;background:linear-gradient(#868686,#999999);"></div>
<div class="a s" style="left:997.3px;top:280.98px;font-size:14.9px;line-height:14.9px;color:#5a5a5a;font-weight:400;">Widget</div>
<div class="a" style="left:989px;top:306px;width:339px;height:36px;background:#8a8e99;"></div>
<div class="a s" style="left:1005px;top:317.18px;font-size:14.9px;line-height:14.9px;color:#1e1e1e;font-weight:400;">Interaction in saved query</div>
<div class="a" style="left:989px;top:448px;width:339px;height:1px;background:#888888;"></div>
<svg class="a" style="left:1009px;top:463px;" width="12" height="8" viewBox="0 0 12 8"><path d="M1 6.5 L6 1.5 L11 6.5" fill="none" stroke="#3a3a3a" stroke-width="1.2"/></svg>
<svg class="a" style="left:1037px;top:463px;" width="12" height="8" viewBox="0 0 12 8"><path d="M1 1.5 L6 6.5 L11 1.5" fill="none" stroke="#3a3a3a" stroke-width="1.2"/></svg>
<svg class="a" style="left:1297px;top:461px;" width="12" height="12" viewBox="0 0 12 12"><path d="M6 0.5 V11.5 M0.5 6 H11.5" stroke="#333" stroke-width="1.3"/></svg>
<div class="a" style="left:989px;top:484px;width:339px;height:1px;background:#828282;"></div>
<div class="a s" style="left:1005px;top:504.65px;font-size:14px;line-height:14.0px;color:#1e1e1e;font-weight:700;-webkit-text-stroke:0.05px currentColor;">Display</div>
<svg class="a" style="left:1297px;top:507px;" width="12" height="8" viewBox="0 0 12 8"><path d="M1 1.5 L6 6.5 L11 1.5" fill="none" stroke="#1e1e1e" stroke-width="1.3"/></svg>
<div class="a s" style="left:1005px;top:539.81px;font-size:14.4px;line-height:14.4px;color:#505050;font-weight:400;">Name</div>
<div class="a" style="left:1005px;top:561px;width:308px;height:36px;background:#8a8a8a;border-radius:4px;"></div>
<div class="a s" style="left:1013px;top:571.68px;font-size:14.9px;line-height:14.9px;color:#1e1e1e;font-weight:400;">Interaction in saved query</div>
<div class="a s" style="left:1005px;top:609.80px;font-size:15px;line-height:15.0px;color:#505050;font-weight:400;">Title template</div>
<svg class="a" style="left:1101px;top:611px;" width="13" height="13" viewBox="0 0 13 13"><circle cx="6.5" cy="6.5" r="5.6" fill="none" stroke="#1e1e1e" stroke-width="1.2"/><path d="M6.5 5.5 V10" stroke="#1e1e1e" stroke-width="1.4"/><circle cx="6.5" cy="3.6" r="0.9" fill="#1e1e1e"/></svg>
<div class="a" style="left:1005px;top:634px;width:308px;height:35px;background:#8a8a8a;border-radius:4px;"></div>
<div class="a s" style="left:1013px;top:644.97px;font-size:14.8px;line-height:14.8px;color:#626262;font-weight:400;">e.g. 'Open {{ fields.myField }}'</div>
<div class="a" style="left:989px;top:686px;width:339px;height:1px;background:#828282;"></div>
<div class="a s" style="left:1005px;top:706.15px;font-size:14px;line-height:14.0px;color:#1e1e1e;font-weight:700;-webkit-text-stroke:0.05px currentColor;">Behavior</div>
<svg class="a" style="left:1297px;top:709px;" width="12" height="8" viewBox="0 0 12 8"><path d="M1 1.5 L6 6.5 L11 1.5" fill="none" stroke="#1e1e1e" stroke-width="1.3"/></svg>
<div class="a s" style="left:1005px;top:741.00px;font-size:15px;line-height:15.0px;color:#505050;font-weight:400;">Type</div>
<div class="a" style="left:1005px;top:763.5px;width:308px;height:35px;background:#8a8a8a;border-radius:4px;"></div>
<div class="a s" style="left:1013px;top:773.10px;font-size:15px;line-height:15.0px;color:#1e1e1e;font-weight:400;">Dashboard link</div>
<svg class="a" style="left:1291px;top:778.0px;" width="12" height="8" viewBox="0 0 12 8"><path d="M1 1.5 L6 6.5 L11 1.5" fill="none" stroke="#1e1e1e" stroke-width="1.3"/></svg>
<div class="a s" style="left:1005px;top:808.70px;font-size:15px;line-height:15.0px;color:#505050;font-weight:400;">Target repository</div>
<div class="a" style="left:1005px;top:831.2px;width:308px;height:35px;background:#8a8a8a;border-radius:4px;"></div>
<div class="a s" style="left:1013px;top:840.80px;font-size:15px;line-height:15.0px;color:#1e1e1e;font-weight:400;">Current repository (github)</div>
<svg class="a" style="left:1291px;top:845.7px;" width="12" height="8" viewBox="0 0 12 8"><path d="M1 1.5 L6 6.5 L11 1.5" fill="none" stroke="#1e1e1e" stroke-width="1.3"/></svg>
<div class="a s" style="left:1005px;top:876.80px;font-size:15px;line-height:15.0px;color:#505050;font-weight:400;">Target dashboard</div>
<div class="a" style="left:1005px;top:899.3px;width:308px;height:35px;background:#8a8a8a;border-radius:4px;"></div>
<div class="a s" style="left:1013px;top:908.90px;font-size:15px;line-height:15.0px;color:#1e1e1e;font-weight:400;">Widget Visualization</div>
<svg class="a" style="left:1291px;top:913.8px;" width="12" height="8" viewBox="0 0 12 8"><path d="M1 1.5 L6 6.5 L11 1.5" fill="none" stroke="#1e1e1e" stroke-width="1.3"/></svg>
<div class="a" style="left:1005px;top:947px;width:13px;height:13px;background:transparent;border:1px solid #333;border-radius:2.5px;box-sizing:border-box;"></div>
<div class="a s" style="left:1026.6px;top:945.47px;font-size:14.8px;line-height:14.8px;color:#1e1e1e;font-weight:400;">Open in new tab</div>
<div class="a" style="left:1005px;top:975px;width:13px;height:13px;background:#2449a6;border-radius:2.5px;"></div>
<svg class="a" style="left:1005px;top:975px;" width="13" height="13" viewBox="0 0 13 13"><path d="M3 6.8 L5.5 9.3 L10.2 3.8" fill="none" stroke="#ffffff" stroke-width="1.8"/></svg>
<div class="a s" style="left:1026.6px;top:973.30px;font-size:15px;line-height:15.0px;color:#1e1e1e;font-weight:400;">Use time window from widget</div>
<div class="a" style="left:1328px;top:234px;width:31px;height:755px;background:#939393;"></div>
<div class="a" style="left:1328px;top:234px;width:1px;height:755px;background:#888888;"></div>
<svg class="a" style="left:1329px;top:236px" width="30" height="60" viewBox="0 0 494 989"><path d="M197 125 L332 148 L322 258 H207 Z" fill="none" stroke="#1e1e1e" stroke-width="22" stroke-linejoin="round"/><path d="M210 212 H322" stroke="#555" stroke-width="24"/><path d="M232 262 L248 302 H278 L294 262 Z" fill="#1e1e1e"/><path d="M347 776 A92 92 0 1 0 298 826" fill="none" stroke="#1e1e1e" stroke-width="22"/><path d="M305 748 A43 43 0 1 0 270 783" fill="none" stroke="#1e1e1e" stroke-width="20"/><path d="M280 755 L368 800 L330 812 L316 850 Z" fill="#1e1e1e"/></svg>
<div class="a" style="left:1357px;top:265px;width:2px;height:32px;background:#1e6473;"></div>
<div class="a" style="left:478px;top:417px;width:400px;height:292px;background:#ffffff;border-radius:5px;box-shadow:0 3px 14px rgba(0,0,0,0.18);"></div>
<div class="a s" style="left:510.1px;top:452.76px;font-size:20.6px;line-height:20.6px;color:#2a2a2a;font-weight:700;-webkit-text-stroke:0.05px currentColor;">Save query</div>
<svg class="a" style="left:827px;top:456px;" width="14" height="14" viewBox="0 0 14 14"><path d="M1.5 1.5 L12.5 12.5 M12.5 1.5 L1.5 12.5" stroke="#2a2a2a" stroke-width="1.5"/></svg>
<div class="a s" style="left:510.1px;top:495.96px;font-size:14.1px;line-height:14.1px;color:#6a6a6a;font-weight:700;-webkit-text-stroke:0.05px currentColor;">Override existing query</div>
<div class="a" style="left:510px;top:517px;width:320px;height:35.5px;background:#e8e8e8;border-radius:4px;"></div>
<div class="a s" style="left:518.3px;top:526.70px;font-size:15px;line-height:15.0px;color:#2a2a2a;font-weight:400;">Saved query for interaction</div>
<svg class="a" style="left:807px;top:530px;" width="13" height="9" viewBox="0 0 13 9"><path d="M1 1.5 L6.5 7 L12 1.5" fill="none" stroke="#2a2a2a" stroke-width="1.3"/></svg>
<div class="a s" style="left:510.1px;top:568.12px;font-size:14.5px;line-height:14.5px;color:#6a6a6a;font-weight:700;-webkit-text-stroke:0.05px currentColor;">Name</div>
<div class="a s" style="left:552.3px;top:568.12px;font-size:14.5px;line-height:14.5px;color:#a52020;font-weight:700;-webkit-text-stroke:0.05px currentColor;">*</div>
<div class="a" style="left:510px;top:589.3px;width:320px;height:35.5px;background:#e8e8e8;border-radius:4px;"></div>
<div class="a s" style="left:518.3px;top:598.80px;font-size:15px;line-height:15.0px;color:#2a2a2a;font-weight:400;">New saved query for interaction</div>
<div class="a s" style="left:724.5px;top:652.31px;font-size:14.4px;line-height:14.4px;color:#2a2a2a;font-weight:400;">Cancel</div>
<div class="a" style="left:790px;top:641.3px;width:56px;height:35.5px;background:#155b6b;border-radius:4px;"></div>
<div class="a s" style="left:801.5px;top:652.22px;font-size:14.5px;line-height:14.5px;color:#ffffff;font-weight:400;">Save</div>
</body></html>
